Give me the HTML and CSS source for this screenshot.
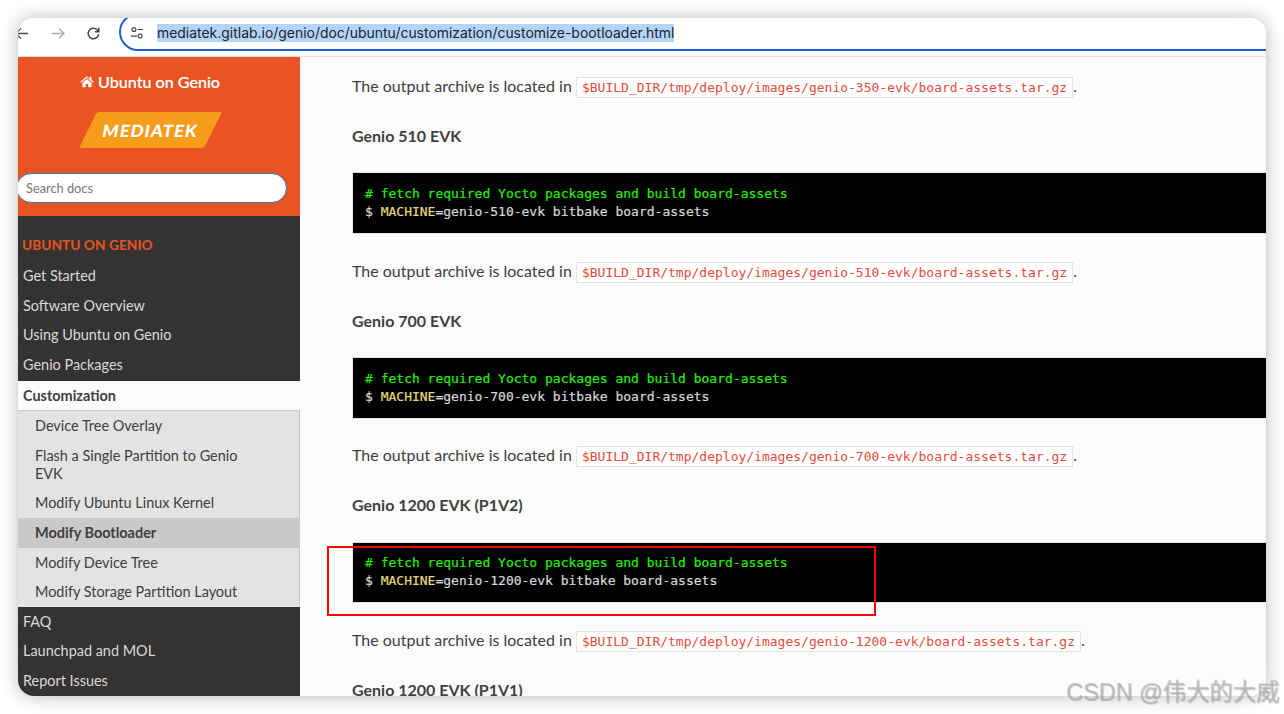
FILE: index.html
```html
<!DOCTYPE html>
<html lang="en">
<head>
<meta charset="utf-8">
<title>Modify Bootloader</title>
<link rel="stylesheet" href="styles.css">
</head>
<body>
<div class="window">
  <header class="toolbar">
    <svg class="tool back" viewBox="0 0 16 16"><path d="M15 8H2M7.5 2.5 2 8l5.500 5.500"/></svg>
    <svg class="tool forward" viewBox="0 0 16 16"><path d="M1 8h13M8.500 2.500 14 8l-5.500 5.500"/></svg>
    <svg class="tool reload" viewBox="0 0 16 16"><path d="M13.500 8.500A5.600 5.600 0 1 1 12 4.200L13.500 5.800M13.700 1.800v4.200H9.500"/></svg>
    <div class="omnibox">
      <svg class="tune" viewBox="0 0 16 16"><circle cx="4.500" cy="4" r="2.200"/><path d="M8.500 4H15M1 11.500h7"/><circle cx="11.500" cy="11.500" r="2.200"/></svg>
      <span class="url">mediatek.gitlab.io/genio/doc/ubuntu/customization/customize-bootloader.html</span>
    </div>
  </header>
  <div class="page">
    <aside class="sidebar">
      <div class="side-head">
        <a class="home"><svg class="home-icon" viewBox="0 0 16 14"><path d="M8 1 .3 7.300l.8 1L8 2.700l6.900 5.600.8-1-2.700-2.200V1.500h-2v3L8 1zM2.800 8.400V13.500h3.700V9.800h3V13.500h3.700V8.400L8 4.200z"/></svg> Ubuntu on Genio</a>
        <div class="logo"><span class="logo-text">MEDIATEK</span></div>
        <input class="search" type="text" placeholder="Search docs">
      </div>
      <nav class="nav">
        <p class="caption">UBUNTU ON GENIO</p>
        <a class="item">Get Started</a>
        <a class="item">Software Overview</a>
        <a class="item">Using Ubuntu on Genio</a>
        <a class="item">Genio Packages</a>
        <a class="item open">Customization</a>
        <div class="sub">
          <a class="sub-item">Device Tree Overlay</a>
          <a class="sub-item">Flash a Single Partition to Genio EVK</a>
          <a class="sub-item">Modify Ubuntu Linux Kernel</a>
          <a class="sub-item current">Modify Bootloader</a>
          <a class="sub-item">Modify Device Tree</a>
          <a class="sub-item">Modify Storage Partition Layout</a>
        </div>
        <a class="item">FAQ</a>
        <a class="item">Launchpad and MOL</a>
        <a class="item">Report Issues</a>
      </nav>
    </aside>
    <main class="content">
      <p class="text">The output archive is located in <code class="lit">$BUILD_DIR/tmp/deploy/images/genio-350-evk/board-assets.tar.gz</code>.</p>
      <h3 class="title">Genio 510 EVK</h3>
      <pre class="block"><span class="cm"># fetch required Yocto packages and build board-assets</span>
<span class="pr">$</span> <span class="var">MACHINE</span>=genio-510-evk bitbake board-assets</pre>
      <p class="text">The output archive is located in <code class="lit">$BUILD_DIR/tmp/deploy/images/genio-510-evk/board-assets.tar.gz</code>.</p>
      <h3 class="title">Genio 700 EVK</h3>
      <pre class="block"><span class="cm"># fetch required Yocto packages and build board-assets</span>
<span class="pr">$</span> <span class="var">MACHINE</span>=genio-700-evk bitbake board-assets</pre>
      <p class="text">The output archive is located in <code class="lit">$BUILD_DIR/tmp/deploy/images/genio-700-evk/board-assets.tar.gz</code>.</p>
      <h3 class="title">Genio 1200 EVK (P1V2)</h3>
      <pre class="block"><span class="cm"># fetch required Yocto packages and build board-assets</span>
<span class="pr">$</span> <span class="var">MACHINE</span>=genio-1200-evk bitbake board-assets</pre>
      <p class="text">The output archive is located in <code class="lit">$BUILD_DIR/tmp/deploy/images/genio-1200-evk/board-assets.tar.gz</code>.</p>
      <h3 class="title">Genio 1200 EVK (P1V1)</h3>
    </main>
  </div>
  <div class="redbox"></div>
</div>
<div class="watermark">CSDN @伟大的大威</div>
</body>
</html>
```
FILE: styles.css
```css
* { box-sizing: border-box; }
html, body { margin: 0; height: 100%; background: #fff; overflow: hidden; }
body { padding: 18px; position: relative; font-family: "Lato", "Noto Sans", sans-serif; }

.window {
  position: relative;
  width: 1248px;
  height: 678px;
  border-radius: 16px;
  overflow: hidden;
  display: flex;
  flex-direction: column;
  background: #fcfcfc;
  box-shadow: 0 0 18px rgba(0, 0, 0, .28);
}

.toolbar {
  flex: none;
  height: 39px;
  display: flex;
  align-items: flex-end;
  padding-bottom: 5px;
  background: #fff;
  border-bottom: 1px solid #e1e1e1;
}
.tool {
  flex: none;
  width: 15px;
  height: 15px;
  margin-bottom: 10.500px;
  fill: none;
  stroke: #474747;
  stroke-width: 1.4;
}
.back { margin-left: -4px; }
.forward { margin-left: 22px; stroke: #ababab; }
.reload { margin-left: 20px; stroke-width: 1.6; }
.omnibox {
  flex: none;
  width: 1200px;
  height: 38px;
  margin-left: 18px;
  display: flex;
  align-items: center;
  padding: 2px 0 0 9px;
  border: 2px solid #1a62cd;
  border-radius: 19px;
  background: #fff;
}
.tune {
  flex: none;
  width: 14px;
  height: 14px;
  fill: none;
  stroke: #474747;
  stroke-width: 1.4;
}
.url {
  margin-left: 13px;
  padding: 1px 0;
  font-family: "Inter", "Roboto", sans-serif;
  font-size: 13.950px;
  line-height: 16px;
  color: #1f2328;
  background: #b3d5fd;
}

.page { flex: 1; min-height: 0; display: flex; }

.sidebar {
  flex: none;
  width: 282px;
  display: flex;
  flex-direction: column;
  background: #343331;
}
.side-head {
  flex: none;
  height: 159px;
  padding-top: 15px;
  display: flex;
  flex-direction: column;
  background: #ea5323;
}
.home {
  align-self: center;
  margin-left: -18px;
  font-size: 16.100px;
  line-height: 20px;
  font-weight: 500;
  color: #fff;
  -webkit-text-stroke: .2px #fff;
}
.home-icon { width: 14px; height: 13px; fill: #fff; }
.logo {
  align-self: center;
  width: 125px;
  height: 36px;
  margin-top: 20px;
  margin-left: -18px;
  display: flex;
  align-items: center;
  justify-content: center;
  border-radius: 2px;
  background: #f59c1a;
  transform: skewX(-26.500deg);
}
.logo-text {
  display: block;
  font-size: 17px;
  font-weight: 900;
  letter-spacing: 1.100px;
  color: #fff;
  transform: skewX(18deg);
}
.search {
  width: 271px;
  height: 30px;
  margin: 25px 0 0 -2px;
  padding: 0 9px;
  border: 1px solid #2f74b5;
  border-radius: 15px;
  background: #fff;
  font-family: inherit;
  font-size: 12.800px;
  color: #666;
  outline: none;
}
.search::placeholder { color: #777; opacity: 1; }

.nav { flex: 1; min-height: 0; overflow: hidden; padding-top: 15px; }
.caption {
  margin: 0;
  padding: 4.800px 4px 7.700px;
  font-size: 13.750px;
  line-height: 18px;
  font-weight: 700;
  color: #ea5323;
}
.item {
  display: block;
  padding: 5.800px 5px;
  font-size: 14.450px;
  line-height: 18px;
  color: #d9d9d9;
}
.item.open { margin-top: 1px; background: #fcfcfc; color: #404040; font-weight: 700; }
.sub {
  border-top: 1px solid #c9c9c9;
  border-right: 1px solid #c9c9c9;
  background: #e3e3e3;
}
.sub-item {
  display: block;
  padding: 5.800px 38px 5.800px 17px;
  font-size: 14.450px;
  line-height: 18px;
  color: #404040;
}
.sub-item.current { background: #c9c9c9; font-weight: 700; }

.content {
  flex: 1;
  min-width: 0;
  overflow: hidden;
  padding: 17px 0 0 52px;
  background: #fcfcfc;
  color: #404040;
}
.text {
  margin: 0;
  font-size: 16px;
  line-height: 24px;
  white-space: nowrap;
}
.lit {
  padding: 2px 5px;
  border: 1px solid #e1e4e5;
  background: #fff;
  font-family: "DejaVu Sans Mono", monospace;
  font-size: 13px;
  color: #e74c3c;
}
.title {
  margin: 24px 0 0;
  font-size: 16px;
  line-height: 24px;
  font-weight: 700;
  color: #404040;
}
.block {
  margin: 24.300px 0 24.670px;
  padding: 11.600px 12px 12.100px;
  border: 1px solid #e1e4e5;
  border-right: 0;
  background: #000;
  font-family: "DejaVu Sans Mono", monospace;
  font-size: 13px;
  line-height: 18px;
  color: #d8d8d8;
  -webkit-text-stroke: .2px;
}
.cm { color: #22ee00; }
.pr { color: #d8d8d8; }
.var { color: #e9d77c; }

.redbox {
  position: absolute;
  left: 309px;
  top: 528px;
  width: 549px;
  height: 70px;
  border: 2px solid #f00;
}
.watermark {
  position: absolute;
  left: 1066px;
  top: 678px;
  font-family: "Liberation Sans", "Noto Sans CJK SC", sans-serif;
  font-size: 23.400px;
  line-height: 28px;
  white-space: nowrap;
  color: rgba(175, 175, 175, .65);
  text-shadow: 1px 1px 1px rgba(90, 90, 90, .35);
}
```
